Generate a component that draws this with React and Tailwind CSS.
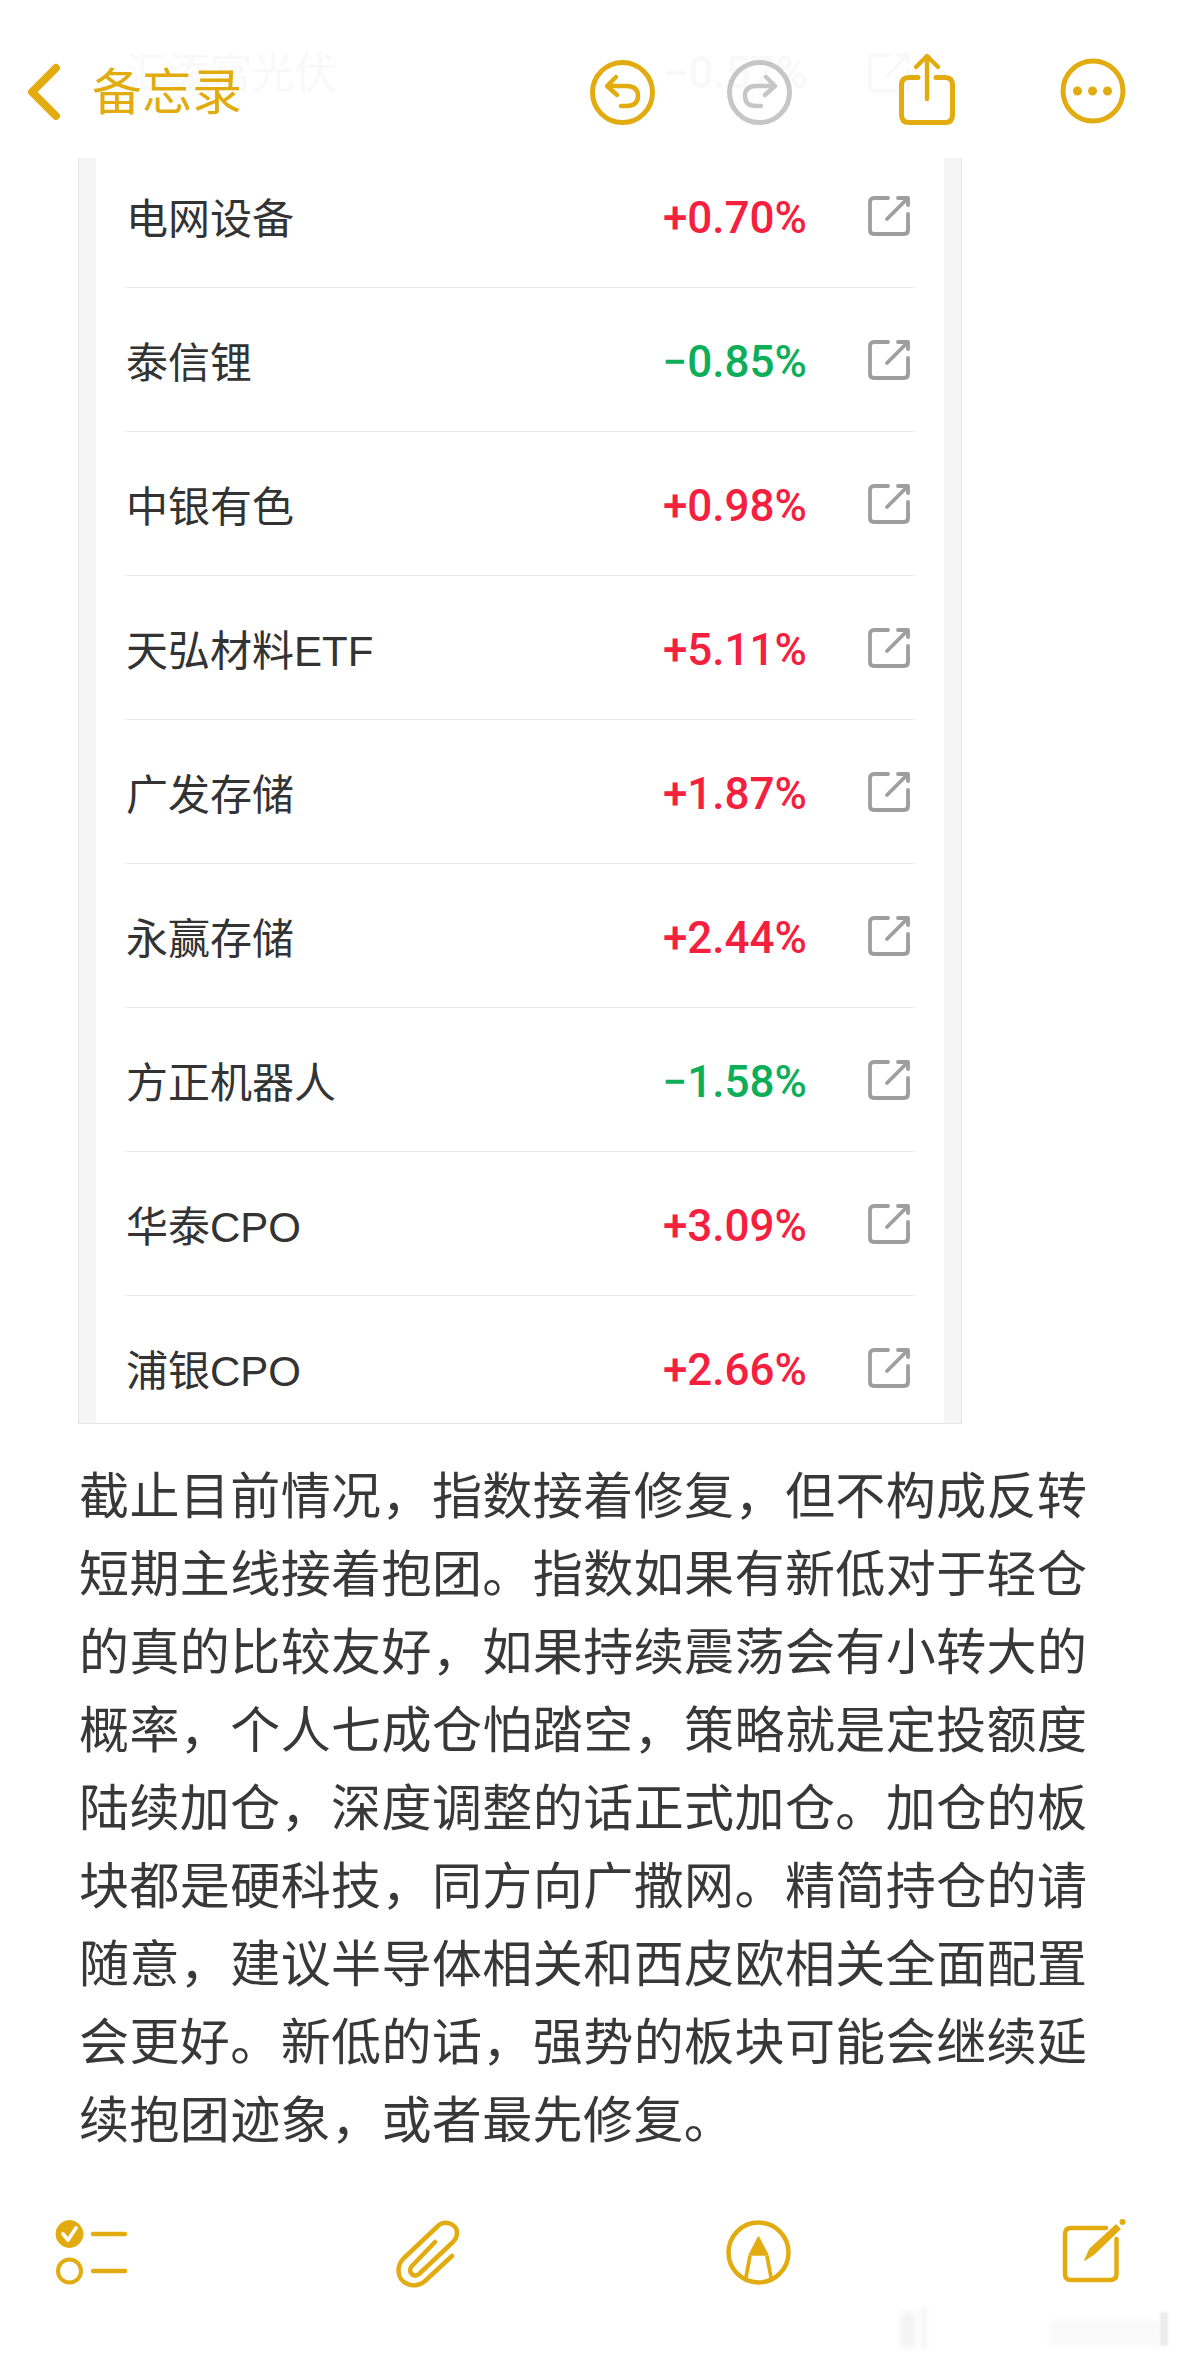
import React from 'react';

const gold = '#e2ac10';

const rows = [
  { name: '电网设备', pct: '+0.70%' },
  { name: '泰信锂', pct: '−0.85%' },
  { name: '中银有色', pct: '+0.98%' },
  { name: '天弘材料ETF', pct: '+5.11%' },
  { name: '广发存储', pct: '+1.87%' },
  { name: '永赢存储', pct: '+2.44%' },
  { name: '方正机器人', pct: '−1.58%' },
  { name: '华泰CPO', pct: '+3.09%' },
  { name: '浦银CPO', pct: '+2.66%' },
];

const lines = [
  '截止目前情况，指数接着修复，但不构成反转',
  '短期主线接着抱团。指数如果有新低对于轻仓',
  '的真的比较友好，如果持续震荡会有小转大的',
  '概率，个人七成仓怕踏空，策略就是定投额度',
  '陆续加仓，深度调整的话正式加仓。加仓的板',
  '块都是硬科技，同方向广撒网。精简持仓的请',
  '随意，建议半导体相关和西皮欧相关全面配置',
  '会更好。新低的话，强势的板块可能会继续延',
];

// external link icon of the table rows
const LinkIcon = ({ color = '#9e9e9e' }) => (
  <svg width="44" height="44" viewBox="0 0 44 44" fill="none" stroke={color} strokeWidth="3.8" strokeLinecap="round" strokeLinejoin="round">
    <path d="M21 4 H7 Q3 4 3 8 V36 Q3 40 7 40 H37 Q41 40 41 36 V20" />
    <path d="M20 25 L40 5 M31 4 H41 V11" />
  </svg>
);

const Header = () => (
  <div className="relative h-[158px] flex items-start pt-[50px] pl-[24px] bg-white overflow-hidden">
    {/* row scrolled under the blurred bar */}
    <div className="absolute left-[126px] top-[1px] w-[788px] h-[144px] flex items-center pr-[3px] text-[#f9f9f9]">
      <span className="flex-1 text-[42px]">汇添富光伏</span>
      <span className="text-[44px] font-medium font-['Roboto'] mr-[59px]">−0.57%</span>
      <LinkIcon color="#f9f9f9" />
    </div>
    <svg className="relative shrink-0" width="40" height="80" viewBox="24 50 40 80" fill="none" stroke={gold} strokeWidth="8" strokeLinecap="round" strokeLinejoin="round">
      <path d="M56 68 L32 92 L56 116" />
    </svg>
    <span className="relative ml-[28px] w-[150px] h-[80px] leading-[86px] text-[50px] text-[#e2ac10]">备忘录</span>
    <svg className="relative shrink-0 ml-[345px]" width="70" height="80" viewBox="587 50 70 80" fill="none" stroke={gold} strokeWidth="5" strokeLinecap="round" strokeLinejoin="round">
      <circle cx="622.5" cy="92.5" r="30" />
      <path d="M616 77 L607 86 L617 95 M608 86 H626 Q638 86 638 96 Q638 106 626 106 H621" strokeWidth="4.4" />
    </svg>
    <svg className="relative shrink-0 ml-[67px]" width="70" height="80" viewBox="724 50 70 80" fill="none" stroke="#c6c6c6" strokeWidth="5" strokeLinecap="round" strokeLinejoin="round">
      <circle cx="759.5" cy="92.5" r="30" />
      <path d="M766 77 L775 86 L765 95 M774 86 H756 Q745 86 745 96 Q745 106 756 106 H761" strokeWidth="4.4" />
    </svg>
    <svg className="relative shrink-0 ml-[102px]" width="62" height="80" viewBox="896 50 62 80" fill="none" stroke={gold} strokeWidth="5" strokeLinecap="round" strokeLinejoin="round">
      <path d="M918 77.500 H909 Q901.500 77.500 901.500 85 V115 Q901.500 122.500 909 122.500 H945 Q952.500 122.500 952.500 115 V85 Q952.500 77.500 945 77.500 H936" />
      <path d="M927 56 V99 M916 67 L927 56 L938 67" strokeWidth="4.4" />
    </svg>
    <svg className="relative shrink-0 ml-[100px]" width="70" height="80" viewBox="1058 50 70 80" fill="none" stroke={gold} strokeWidth="5">
      <circle cx="1093" cy="91" r="30" />
      <g fill={gold} stroke="none">
        <circle cx="1077.500" cy="91" r="4.500" />
        <circle cx="1092.500" cy="91" r="4.500" />
        <circle cx="1107.500" cy="91" r="4.500" />
      </g>
    </svg>
  </div>
);

const Table = () => (
  <div className="ml-[78px] w-[884px] h-[1266px] bg-[#f5f5f5] border-x border-b border-[#e6e6e6] overflow-hidden px-[17px]">
    <div className="bg-white h-full px-[30px] -mt-[14px] pb-[14px] box-content">
      {rows.map((row) => (
        <div key={row.name} className="h-[144px] flex items-center pr-[3px] pt-[7px] border-b border-[#e9e9e9] text-[#333333]">
          <span className="flex-1 text-[42px]">{row.name}</span>
          <span className={`text-[44px] font-medium font-['Roboto',sans-serif] mr-[60px] -mt-[3px] ${row.pct.startsWith('+') ? 'text-[#f5203e]' : 'text-[#0dae5a]'}`}>
            {row.pct}
          </span>
          <div className="-mt-[6px]">
            <LinkIcon />
          </div>
        </div>
      ))}
    </div>
  </div>
);

const Body = () => (
  <div className="ml-[79px] w-[1008px] mt-[34px] text-[50px] leading-[78px] text-[#383838]">
    {lines.map((line) => (
      <div key={line} className="[text-align:justify] [text-align-last:justify]">{line}</div>
    ))}
    <div className="tracking-[0.4px]">续抱团迹象，或者最先修复。</div>
  </div>
);

const Toolbar = () => (
  <div className="mt-[58px] pl-[54px] pr-[52px] flex justify-between items-start">
    <svg width="76" height="72" viewBox="54 2218 76 72" fill="none" stroke={gold} strokeLinecap="round">
      <circle cx="69.500" cy="2234" r="13.500" fill={gold} />
      <path d="M63 2234 L68 2240 L76 2228" stroke="#ffffff" strokeWidth="3.600" strokeLinejoin="round" />
      <circle cx="69.500" cy="2271" r="11.500" strokeWidth="4" />
      <path d="M93 2234 H125 M93 2271 H125" strokeWidth="4.400" />
    </svg>
    <svg width="64" height="72" viewBox="395 2218 64 72" fill="none" stroke={gold} strokeWidth="4.500" strokeLinecap="round" strokeLinejoin="round">
      <path transform="translate(395 2218)" d="M57 38 L30 63 C20 72 3 66 3.500 52 C3.500 47 6 43 9 40 L44 7 C50 2 62 6 62 15 C62 19 60 22 58 24 L24 56 C19 60 13 55 16 49 L40 24" />
    </svg>
    <svg className="mr-[4px]" width="68" height="72" viewBox="724 2218 68 72" fill="none" stroke={gold} strokeWidth="4.500" strokeLinejoin="round">
      <circle cx="758.500" cy="2252.500" r="30" />
      <path d="M758.500 2237 L749 2255 H768 Z" fill={gold} strokeWidth="1.500" />
      <path d="M750 2256 L745.500 2280 M767 2256 L771.500 2280" strokeWidth="3.800" />
    </svg>
    <svg width="66" height="72" viewBox="1061 2218 66 72" fill="none" stroke={gold} strokeWidth="4.500" strokeLinecap="round" strokeLinejoin="round">
      <path d="M1106 2228 H1071 Q1065 2228 1065 2234 V2274 Q1065 2280 1071 2280 H1110 Q1116.500 2280 1116.500 2274 V2239" />
      <path d="M1085 2260 L1090 2249 L1116 2225 L1120 2229 L1094 2254 Z" fill={gold} strokeWidth="1.500" />
      <circle cx="1122.500" cy="2222" r="3" fill={gold} stroke="none" />
    </svg>
  </div>
);

// faint blurred watermark in the bottom corner
const Watermark = () => (
  <>
    <div className="absolute left-[901px] top-[2312px] w-[14px] h-[36px] bg-[#f3f3f3] blur-[3px]" />
    <div className="absolute left-[921px] top-[2306px] w-[5px] h-[42px] bg-[#f4f4f4] blur-[2px]" />
    <div className="absolute left-[1050px] top-[2320px] w-[110px] h-[26px] bg-[#fafafa] blur-[2px]" />
    <div className="absolute left-[1160px] top-[2312px] w-[8px] h-[34px] bg-[#ececec] blur-[1px]" />
  </>
);

const App = () => (
  <div className="relative w-[1179px] h-[2356px] bg-white overflow-hidden font-['Liberation_Sans','Noto_Sans_CJK_SC',sans-serif]">
    <Header />
    <Table />
    <Body />
    <Toolbar />
    <Watermark />
  </div>
);

export default App;
